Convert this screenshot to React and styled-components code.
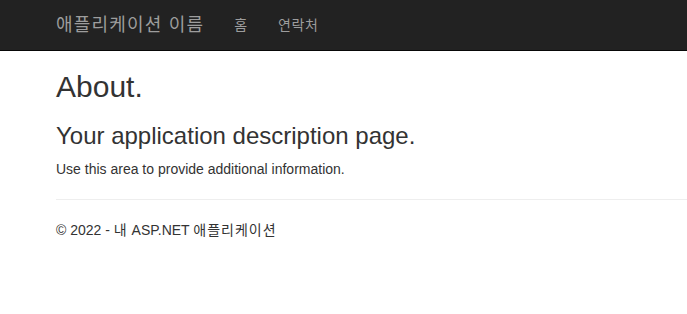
import React from "react";
import styled, { createGlobalStyle } from "styled-components";

const GlobalStyle = createGlobalStyle`
  html, body {
    margin: 0;
    padding: 0;
    overflow-x: hidden;
  }
  body {
    font-family: "Liberation Sans", Arial, "Noto Sans CJK KR", sans-serif;
    font-size: 14px;
    line-height: 1.42857143;
    color: #333;
    background: #fff;
    padding-top: 50px;
  }
`;

const Navbar = styled.nav`
  position: fixed;
  top: 0;
  left: 0;
  right: 0;
  height: 50px;
  background: #222;
  border-bottom: 1px solid #080808;
  z-index: 10;
`;

const NavInner = styled.div`
  display: flex;
  align-items: center;
  padding-left: 41px;
  height: 50px;
`;

const Brand = styled.a`
  padding: 15px;
  font-size: 18px;
  line-height: 20px;
  letter-spacing: 1.2px;
  color: #9d9d9d;
  text-decoration: none;
`;

const NavList = styled.ul`
  display: flex;
  list-style: none;
  margin: 0;
  padding: 0;
`;

const NavLink = styled.a`
  display: block;
  padding: 15px;
  line-height: 20px;
  letter-spacing: 0.7px;
  color: #9d9d9d;
  text-decoration: none;
`;

const Container = styled.div`
  padding-left: 56px;
`;

const Title = styled.h2`
  font-size: 30px;
  font-weight: 500;
  line-height: 1.1;
  margin: 20px 0 10px;
`;

const Subtitle = styled.h3`
  font-size: 24px;
  font-weight: 500;
  line-height: 1.1;
  margin: 20px 0 10px;
`;

const Text = styled.p`
  margin: 0 0 10px;
`;

const Hangul = styled.span`
  letter-spacing: 1px;
`;

const Rule = styled.hr`
  margin: 20px 0;
  border: 0;
  border-top: 1px solid #eee;
`;

export default function App() {
  return (
    <>
      <GlobalStyle />
      <Navbar>
        <NavInner>
          <Brand href="#">애플리케이션 이름</Brand>
          <NavList>
            <li><NavLink href="#">홈</NavLink></li>
            <li><NavLink href="#">연락처</NavLink></li>
          </NavList>
        </NavInner>
      </Navbar>
      <Container>
        <Title>About.</Title>
        <Subtitle>Your application description page.</Subtitle>
        <Text>Use this area to provide additional information.</Text>
        <Rule />
        <footer>
          <Text>
            © 2022 - <Hangul>내</Hangul> ASP.NET <Hangul>애플리케이션</Hangul>
          </Text>
        </footer>
      </Container>
    </>
  );
}
